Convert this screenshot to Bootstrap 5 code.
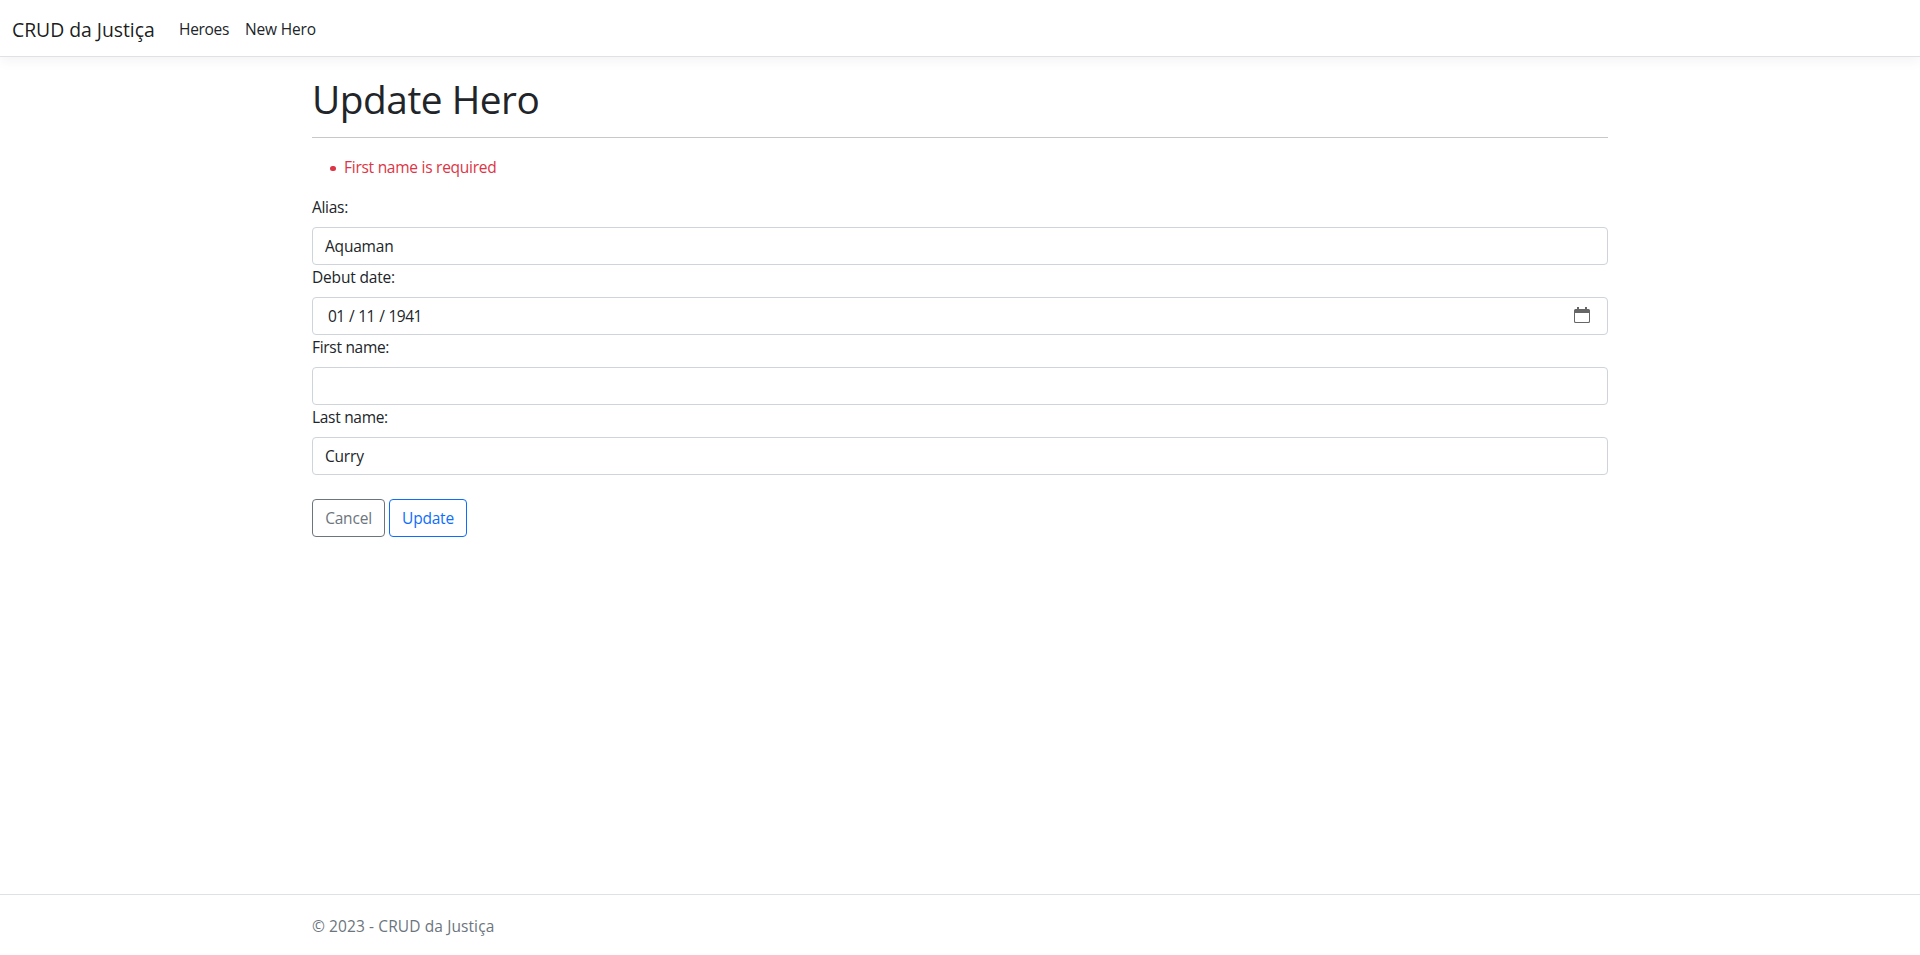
<!DOCTYPE html>
<html lang="en">
<head>
<meta charset="utf-8">
<meta name="viewport" content="width=device-width, initial-scale=1">
<title>Update Hero - CRUD da Justiça</title>
<link rel="stylesheet" href="https://cdn.jsdelivr.net/npm/bootstrap@5.3.0/dist/css/bootstrap.min.css">
<style>
body { font-family: "Open Sans", "Noto Sans", sans-serif; font-size: 15.5px; line-height: 24px; color: #212529; }
.site-nav { height: 57px; padding: 9px 0 7px; box-shadow: 0 .25rem .75rem rgba(0, 0, 0, .05); }
.navbar-brand { font-size: 19.4px; line-height: 30px; width: 143px; letter-spacing: -.04px; white-space: nowrap; color: rgba(0, 0, 0, .9); }
.site-nav .navbar-brand { padding: 6px 0 4px; }
.site-nav .nav-link { color: #212529; letter-spacing: -.17px; white-space: nowrap; }
.site-nav .nav-heroes { width: 66px; letter-spacing: -.3px; }
.page-title { font-size: 38.8px; line-height: 48px; letter-spacing: -.48px; padding-top: 2px; height: 48px; }
.page-rule { border-top: 1px solid #212529; opacity: .25; margin: 16px 0 17px; }
.error-list { letter-spacing: -.26px; list-style: none; }
.error-list li { position: relative; }
.error-list li::before { content: ""; position: absolute; left: -13.700px; top: 10.500px; width: 5.500px; height: 5.500px; border-radius: 50%; background: currentColor; }
.form-label { letter-spacing: -.3px; }
.label-date { letter-spacing: -.17px; }
.form-control, .btn { font-size: 15.5px; line-height: 24px; letter-spacing: -.2px; }
.form-control { height: 38px; border-color: #ced4da; border-radius: 4px; color: #212529; }
.btn { height: 38px; border-radius: 4px; padding-left: 0; padding-right: 0; }
.btn-cancel { width: 73px; }
.btn-update { width: 78px; }
.date-parts { padding-left: 3px; letter-spacing: -.5px; }
.date-parts .sep { width: 13.500px; text-align: center; }
.calendar-icon { margin: -2px 5px 0 0; }
.site-footer { height: 61px; line-height: 62px; color: #6c757d; letter-spacing: .1px; }
</style>
</head>
<body class="d-flex flex-column min-vh-100 bg-white">
<header>
  <nav class="navbar navbar-expand navbar-light bg-white border-bottom site-nav">
    <div class="container-fluid">
      <a class="navbar-brand" href="#">CRUD da Justiça</a>
      <ul class="navbar-nav me-auto">
        <li class="nav-item"><a class="nav-link nav-heroes" href="#">Heroes</a></li>
        <li class="nav-item"><a class="nav-link" href="#">New Hero</a></li>
      </ul>
    </div>
  </nav>
</header>
<div class="container flex-grow-1">
  <main class="pt-3 pb-3">
    <h1 class="page-title mb-0">Update Hero</h1>
    <hr class="page-rule">
    <form onsubmit="return false">
      <ul class="error-list text-danger mb-3"><li>First name is required</li></ul>
      <div>
        <label class="form-label d-block mb-2" for="alias">Alias:</label>
        <input class="form-control" id="alias" value="Aquaman">
      </div>
      <div>
        <label class="form-label label-date d-block mb-2">Debut date:</label>
        <div class="form-control d-flex align-items-center justify-content-between">
          <div class="date-parts d-flex"><span>01</span><span class="sep">/</span><span>11</span><span class="sep">/</span><span>1941</span></div>
          <svg class="calendar-icon" width="16" height="16" viewBox="0 0 16 16" fill="#666"><path fill-rule="evenodd" d="M3 0h2v2h6V0h2v2h1.500A1.500 1.500 0 0 1 16 3.500v11a1.500 1.500 0 0 1-1.500 1.500h-13A1.500 1.500 0 0 1 0 14.500v-11A1.500 1.500 0 0 1 1.500 2H3zM1 6v8.200c0 .5.300.8.800.8h12.400c.5 0 .8-.3.8-.8V6z"/></svg>
        </div>
      </div>
      <div>
        <label class="form-label d-block mb-2" for="first">First name:</label>
        <input class="form-control" id="first">
      </div>
      <div>
        <label class="form-label d-block mb-2" for="last">Last name:</label>
        <input class="form-control" id="last" value="Curry">
      </div>
      <div class="d-flex gap-1 mt-4">
        <a class="btn btn-outline-secondary btn-cancel" href="#">Cancel</a>
        <button class="btn btn-outline-primary btn-update" type="submit">Update</button>
      </div>
    </form>
  </main>
</div>
<footer class="site-footer border-top">
  <div class="container">© 2023 - CRUD da Justiça</div>
</footer>
<script src="https://cdn.jsdelivr.net/npm/bootstrap@5.3.0/dist/js/bootstrap.bundle.min.js"></script>
</body>
</html>
